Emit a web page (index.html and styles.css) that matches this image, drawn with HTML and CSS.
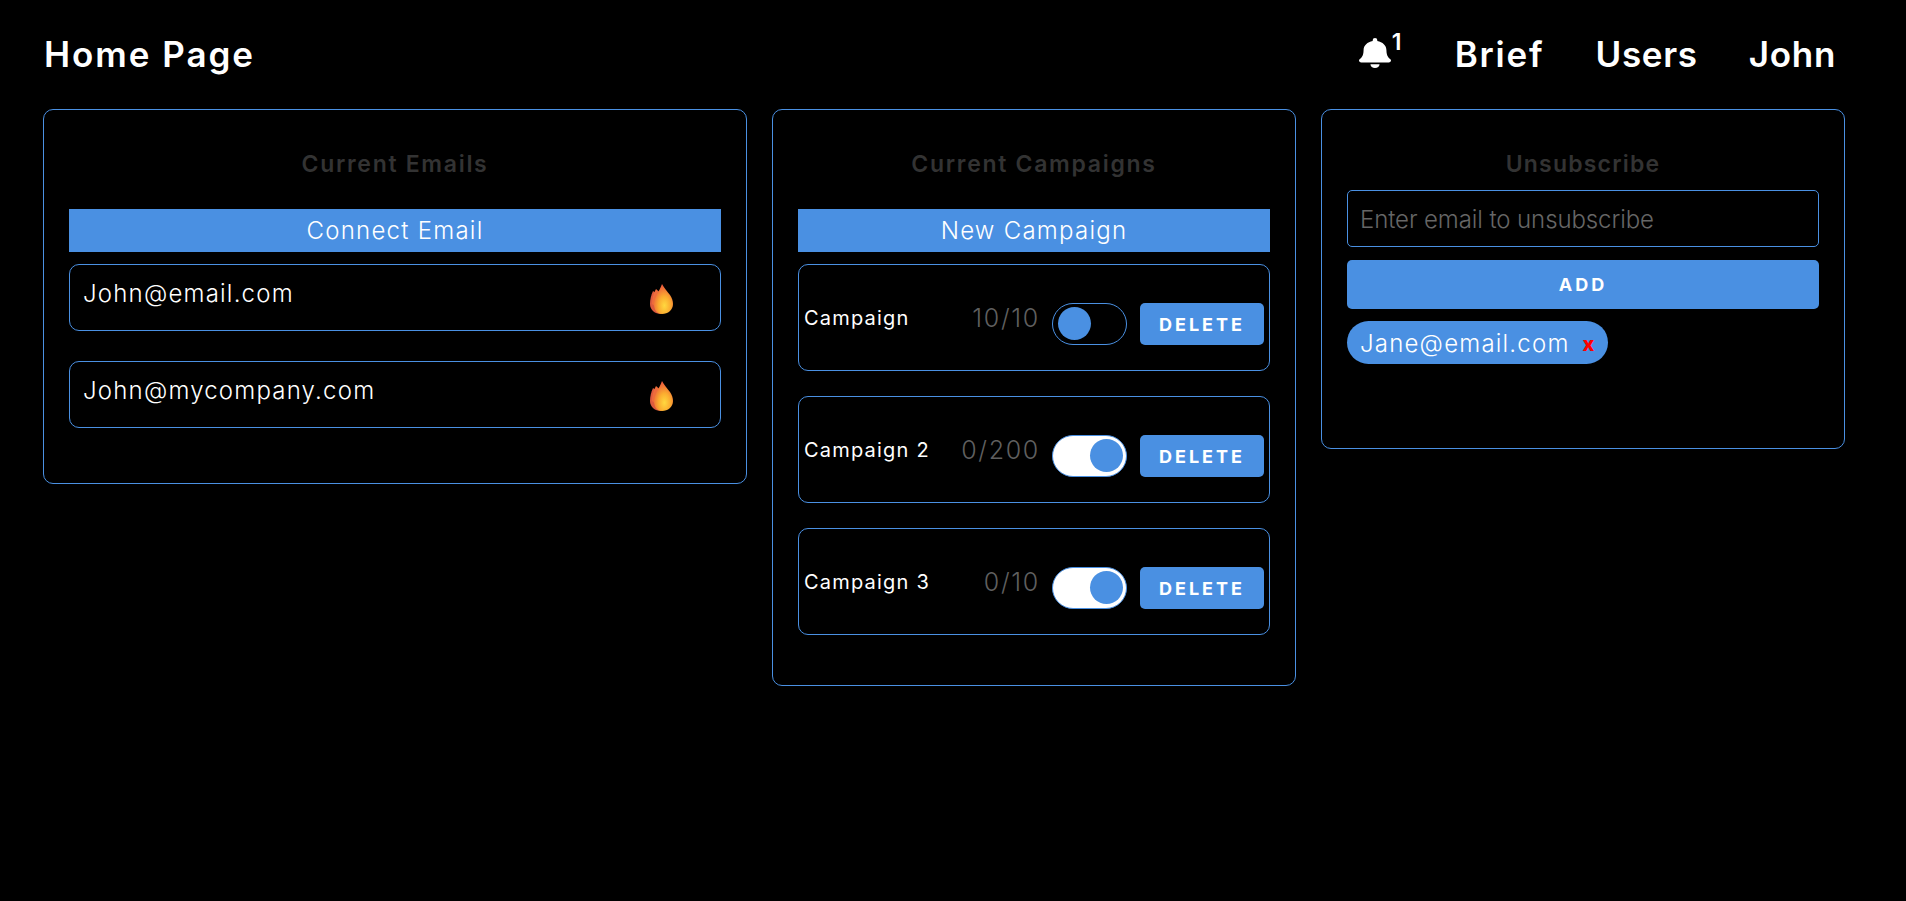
FILE: index.html
```html
<!DOCTYPE html>
<html lang="en">
<head>
<meta charset="utf-8">
<title>Home Page</title>
<link rel="stylesheet" href="styles.css">
</head>
<body>
<svg class="defs" width="0" height="0" aria-hidden="true">
  <defs>
    <radialGradient id="flame" cx="0.55" cy="0.72" r="0.68">
      <stop offset="0" stop-color="#ffd83f"/>
      <stop offset="0.45" stop-color="#fbad30"/>
      <stop offset="1" stop-color="#ec5a3b"/>
    </radialGradient>
    <symbol id="fire" viewBox="0 0 23 30">
      <path fill="#dc5a3e" d="M3 7C1 11 0 16 0 20c0 6 5 10 11 10l3-15z"/>
      <path fill="#ee6c3c" d="M6 5C3 10 2 15 2 20l12 9V12z"/>
      <path fill="url(#flame)" d="M12 0c2 4 5 7 8 11 2 3 3 6 3 9 0 6-5 10-11 10-5 0-8-4-8-10 0-6 5-12 8-20z"/>
    </symbol>
  </defs>
</svg>
<header class="topbar">
  <div class="brand">Home Page</div>
  <nav class="nav">
    <span class="bell">
      <svg class="bell-icon" viewBox="0 0 448 512" preserveAspectRatio="none"><path fill="#fff" d="M224 512c35 0 64-29 64-64H160c0 35 29 64 64 64zm215-150c-19-21-55-52-55-154 0-78-54-140-128-155V32a32 32 0 1 0-64 0v21C118 68 64 130 64 208c0 102-36 133-55 154-6 6-9 14-9 22 0 16 13 32 32 32h384c19 0 32-16 32-32 0-8-3-16-9-22z"/></svg>
      <sup class="bell-count">1</sup>
    </span>
    <a class="nav-link nav-link-wide">Brief</a>
    <a class="nav-link">Users</a>
    <a class="nav-link">John</a>
  </nav>
</header>
<main class="columns">
  <section class="card card-emails">
    <h2 class="card-title">Current Emails</h2>
    <div class="wide-button">Connect Email</div>
    <div class="email-row">
      <span class="email-text">John@email.com</span>
      <svg class="fire"><use href="#fire"/></svg>
    </div>
    <div class="email-row">
      <span class="email-text">John@mycompany.com</span>
      <svg class="fire"><use href="#fire"/></svg>
    </div>
  </section>
  <section class="card card-campaigns">
    <h2 class="card-title">Current Campaigns</h2>
    <div class="wide-button">New Campaign</div>
    <div class="campaign-row">
      <span class="campaign-name">Campaign</span>
      <span class="campaign-count">10/10</span>
      <span class="toggle"><span class="knob"></span></span>
      <button class="delete">DELETE</button>
    </div>
    <div class="campaign-row">
      <span class="campaign-name">Campaign 2</span>
      <span class="campaign-count">0/200</span>
      <span class="toggle on"><span class="knob"></span></span>
      <button class="delete">DELETE</button>
    </div>
    <div class="campaign-row">
      <span class="campaign-name">Campaign 3</span>
      <span class="campaign-count">0/10</span>
      <span class="toggle on"><span class="knob"></span></span>
      <button class="delete">DELETE</button>
    </div>
  </section>
  <section class="card card-unsub">
    <h2 class="card-title card-title-tight">Unsubscribe</h2>
    <input class="unsub-input" placeholder="Enter email to unsubscribe">
    <button class="add">ADD</button>
    <div class="chip"><span>Jane@email.com</span><span class="chip-x">x</span></div>
  </section>
</main>
</body>
</html>
```
FILE: styles.css
```css
* { box-sizing: border-box; }
html, body { margin: 0; height: 100%; }
body { background: #000; color: #fff; font-family: "Inter", "Noto Sans", sans-serif; overflow: hidden; }
.defs { display: block; height: 0; }
.topbar { display: flex; justify-content: space-between; align-items: center; height: 109px; padding: 0 44px 2px; }
.brand { font-size: 35px; font-weight: 600; letter-spacing: 1.95px; }
.nav { display: flex; align-items: center; gap: 51px; padding-right: 26px; }
.nav-link { font-size: 35px; font-weight: 600; letter-spacing: 0.7px; }
.nav-link-wide { letter-spacing: 1.8px; }
.bell { position: relative; display: flex; width: 45px; height: 40px; }
.bell-icon { width: 32px; height: 30px; margin-top: 4px; }
.bell-count { position: absolute; left: 33px; top: -6px; margin: 0; font-size: 23px; font-weight: 600; line-height: 28px; }
.columns { display: flex; align-items: flex-start; gap: 25px; padding: 0 43px; }
.card { border: 1px solid #4a90e2; border-radius: 10px; padding: 25px; }
.card-emails { width: 704px; height: 375px; }
.card-campaigns { width: 524px; height: 577px; }
.card-unsub { width: 524px; height: 340px; }
.card-title { margin: 14px 0 30px; color: #333; font-size: 23px; font-weight: 600; letter-spacing: 1.7px; text-align: center; line-height: 30px; }
.card-title-tight { margin-bottom: 11px; letter-spacing: 1.2px; }
.wide-button { background: #4a90e2; height: 43px; display: flex; align-items: center; justify-content: center; font-size: 24px; font-weight: 300; letter-spacing: 1.25px; margin-bottom: 12px; }
.email-row { border: 1px solid #4a90e2; border-radius: 10px; height: 67px; display: flex; justify-content: space-between; padding: 14px 47px 0 13px; margin-bottom: 30px; }
.email-text { font-size: 24px; font-weight: 300; letter-spacing: 1.2px; }
.fire { width: 23px; height: 30px; margin-top: 5px; }
.campaign-row { border: 1px solid #4a90e2; border-radius: 10px; height: 107px; display: flex; align-items: center; padding: 0 5px; margin-bottom: 25px; }
.campaign-name { font-size: 20px; font-weight: 400; letter-spacing: 1.2px; flex: 1; }
.campaign-count { color: #5f5f5f; font-size: 25px; font-weight: 300; letter-spacing: 1.7px; margin-right: 12px; }
.toggle { width: 75px; height: 42px; border: 1px solid #4a90e2; border-radius: 21px; display: flex; align-items: center; padding: 0 5px 2px; background: #000; margin: 13px 13px 0 0; }
.toggle.on { background: #fff; justify-content: flex-end; padding-right: 3px; }
.knob { width: 33px; height: 33px; border-radius: 50%; background: #4a90e2; }
.delete { width: 124px; height: 42px; margin-top: 13px; background: #4a90e2; border: 0; border-radius: 5px; color: #fff; font-family: inherit; font-size: 18px; font-weight: 700; letter-spacing: 3px; }
.unsub-input { display: block; width: 100%; height: 57px; border: 1px solid #4a90e2; border-radius: 5px; background: #000; color: #fff; font-family: inherit; font-size: 24px; font-weight: 300; letter-spacing: -0.1px; padding: 2px 13px 0 12px; margin-bottom: 13px; }
.unsub-input::placeholder { color: #666; opacity: 1; }
.add { display: block; width: 100%; height: 49px; background: #4a90e2; border: 0; border-radius: 5px; color: #fff; font-family: inherit; font-size: 18px; font-weight: 700; letter-spacing: 3px; margin-bottom: 12px; }
.chip { display: inline-flex; align-items: center; height: 43px; padding: 2px 14px 0 13px; border-radius: 22px; background: #4a90e2; font-size: 24px; font-weight: 300; letter-spacing: 1.2px; gap: 13px; }
.chip-x { color: #f00; font-size: 20px; font-weight: 800; letter-spacing: 0; }
```
